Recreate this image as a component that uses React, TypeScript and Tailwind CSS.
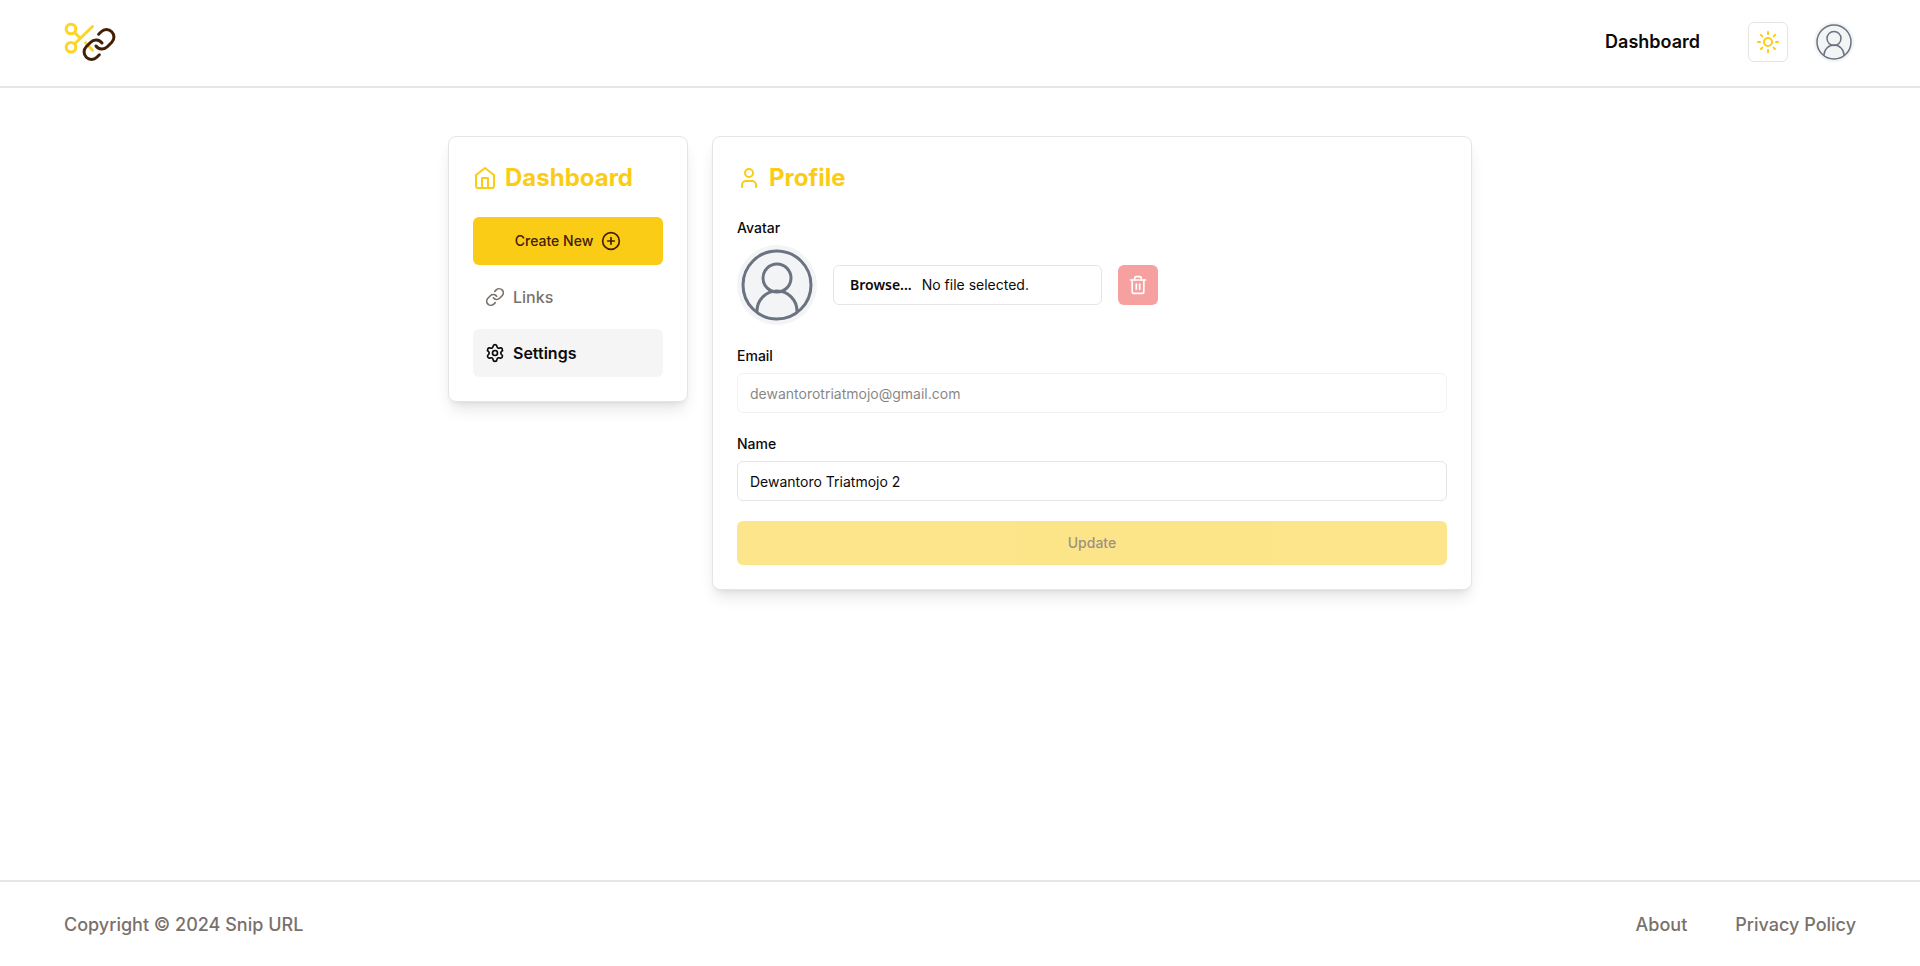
import type { ReactNode } from 'react'
import { CirclePlus, Link, Settings, Sun, Trash2, User } from 'lucide-react'

function Logo() {
    return (
        <svg viewBox="0 0 52 40" className="h-10 w-13" fill="none" strokeLinecap="round" strokeLinejoin="round">
            <g stroke="#fcd527" strokeWidth="3">
                <circle cx="7" cy="7" r="4.8" />
                <circle cx="7" cy="25.3" r="4.8" />
                <path d="M10.500 10.500l5 5M10.500 22L28.500 4.500M21.500 20.800l7 7.400" />
            </g>
            <g stroke="#422006" strokeWidth="2" transform="translate(17 4.500) scale(1.5)">
                <path d="M10 13a5 5 0 0 0 7.540.54l3-3a5 5 0 0 0-7.070-7.070l-1.720 1.710" />
                <path d="M14 11a5 5 0 0 0-7.540-.54l-3 3a5 5 0 0 0 7.070 7.070l1.710-1.710" />
            </g>
        </svg>
    )
}

function HomeIcon() {
    return (
        <svg viewBox="0 0 24 24" className="size-6" fill="none" stroke="currentColor" strokeWidth="2" strokeLinecap="round" strokeLinejoin="round">
            <path d="m3 9 9-7 9 7v11a2 2 0 0 1-2 2H5a2 2 0 0 1-2-2z" />
            <path d="M9 22V12h6v10" />
        </svg>
    )
}

function Avatar({ className }: { className: string }) {
    return (
        <span className={`block overflow-hidden rounded-full bg-[#f3f4f6] ${className}`}>
            <svg viewBox="0 0 80 80" className="size-full" fill="none" stroke="#6b7280" strokeWidth="3">
                <circle cx="40" cy="40" r="34" />
                <circle cx="40" cy="33" r="14" />
                <path d="M20 67v-1a20 20 0 0 1 40 0v1" />
            </svg>
        </span>
    )
}

function Card({ icon, title, children }: { icon: ReactNode; title: string; children: ReactNode }) {
    return (
        <section className="rounded-lg border border-neutral-200 bg-white p-6 shadow-lg">
            <h2 className="mb-[22px] flex items-center gap-2 text-2xl leading-[34px] font-bold text-[#facc15]">
                {icon}
                {title}
            </h2>
            {children}
        </section>
    )
}

export default function App() {
    return (
        <div className="flex min-h-screen flex-col bg-white font-['Inter',sans-serif] text-stone-950">
            <header className="flex h-22 items-center justify-between border-b-2 border-neutral-200 px-16 pb-0.5">
                <a href="#" aria-label="Snip URL">
                    <Logo />
                </a>
                <div className="flex items-center gap-6">
                    <a href="#" className="mr-6 text-lg font-semibold">Dashboard</a>
                    <button aria-label="Toggle theme" className="flex size-10 items-center justify-center rounded-md border border-neutral-200 text-[#facc15]">
                        <Sun className="size-6" />
                    </button>
                    <button aria-label="Account" className="p-0.5">
                        <Avatar className="size-10" />
                    </button>
                </div>
            </header>

            <main className="mx-auto grid w-full max-w-5xl flex-1 grid-cols-[240px_1fr] items-start gap-6 py-12">
                <Card icon={<HomeIcon />} title="Dashboard">
                    <nav className="flex flex-col gap-2">
                        <button className="flex h-12 items-center justify-center gap-2 rounded-md bg-[#facc15] text-sm font-medium text-[#422006]">
                            Create New
                            <CirclePlus className="size-5" />
                        </button>
                        <a href="#" className="flex h-12 items-center gap-2 rounded-md px-3 font-medium text-stone-500">
                            <Link className="size-5" />
                            Links
                        </a>
                        <a href="#" className="flex h-12 items-center gap-2 rounded-md bg-neutral-100 px-3 font-semibold">
                            <Settings className="size-5" />
                            Settings
                        </a>
                    </nav>
                </Card>

                <Card icon={<User className="size-6" />} title="Profile">
                    <form className="flex flex-col gap-5 text-sm">
                        <div className="flex flex-col gap-1.5">
                            <label htmlFor="avatar" className="leading-[22px] font-medium">Avatar</label>
                            <div className="flex items-center gap-4">
                                <Avatar className="size-20" />
                                <label htmlFor="avatar" className="flex h-10 w-[269px] items-center gap-2.5 rounded-md border border-neutral-200 px-4">
                                    <span className="font-['Noto_Sans',sans-serif] font-semibold">Browse...</span>
                                    <span>No file selected.</span>
                                    <input id="avatar" type="file" className="sr-only" />
                                </label>
                                <button type="button" disabled aria-label="Remove avatar" className="flex size-10 items-center justify-center rounded-md bg-[#ef4444] text-white opacity-50">
                                    <Trash2 className="size-5" />
                                </button>
                            </div>
                        </div>
                        <div className="flex flex-col gap-1.5">
                            <label htmlFor="email" className="leading-[22px] font-medium">Email</label>
                            <input id="email" type="email" disabled defaultValue="dewantorotriatmojo@gmail.com" className="h-10 rounded-md border border-neutral-200 px-3 opacity-50" />
                        </div>
                        <div className="flex flex-col gap-1.5">
                            <label htmlFor="name" className="leading-[22px] font-medium">Name</label>
                            <input id="name" type="text" defaultValue="Dewantoro Triatmojo 2" className="h-10 rounded-md border border-neutral-200 px-3" />
                        </div>
                        <button disabled className="h-11 rounded-md bg-[#facc15] font-medium text-[#422006] opacity-50">
                            Update
                        </button>
                    </form>
                </Card>
            </main>

            <footer className="flex h-[86px] items-center justify-between border-t-2 border-neutral-200 px-16 pt-0.5 text-lg font-medium text-stone-500">
                <p>Copyright © 2024 Snip URL</p>
                <nav className="flex gap-12">
                    <a href="#">About</a>
                    <a href="#">Privacy Policy</a>
                </nav>
            </footer>
        </div>
    )
}
